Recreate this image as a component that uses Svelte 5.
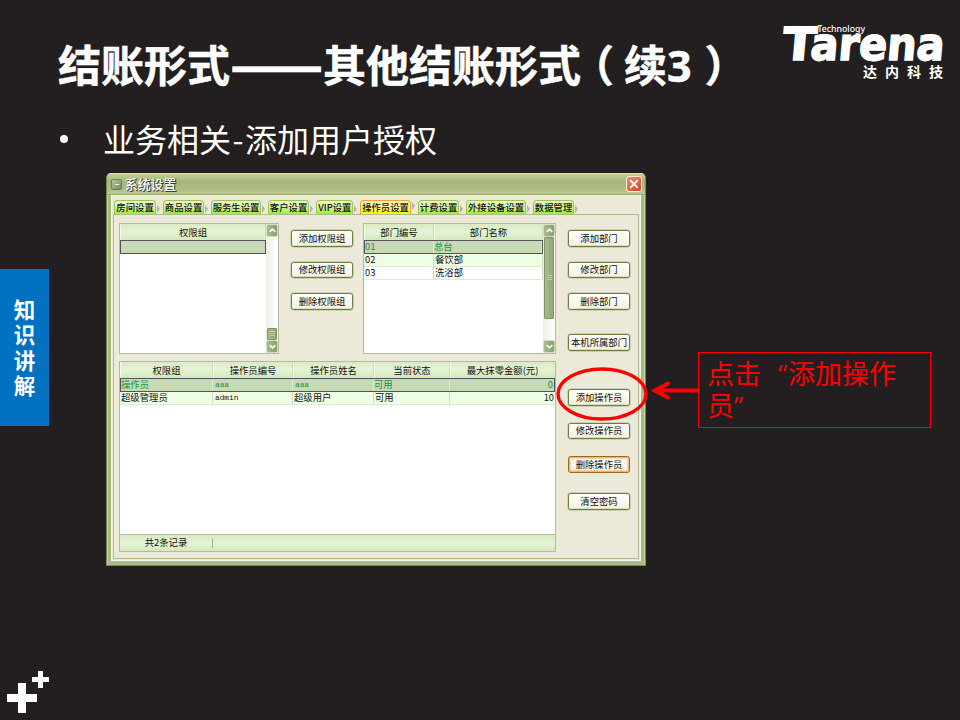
<script>
  const tabs = [
    ['房间设置', 41.5], ['商品设置', 41.5], ['服务生设置', 49.5], ['客户设置', 41.5], ['VIP设置', 37],
    ['操作员设置', 50.5], ['计费设置', 41.5], ['外接设备设置', 59.5], ['数据管理', 41.5]
  ];
  const groupActions = ['添加权限组', '修改权限组', '删除权限组'];
  const sideActions = ['添加部门', '修改部门', '删除部门', '本机所属部门', '添加操作员', '修改操作员', '删除操作员', '清空密码'];
  const departments = [['01', '总台'], ['02', '餐饮部'], ['03', '洗浴部']];
  const operatorHeads = ['权限组', '操作员编号', '操作员姓名', '当前状态', '最大抹零金额(元)'];
  const operators = [
    ['操作员', 'aaa', 'aaa', '可用', '0'],
    ['超级管理员', 'admin', '超级用户', '可用', '10']
  ];
</script>

{#snippet arrow(dir)}
  <i class="sb-arrow">
    <svg width="9" height="9" viewBox="0 0 9 9">
      <path d={dir === 'up' ? 'M1.7 5.8 4.5 3.1l2.8 2.7' : 'M1.7 3.2 4.5 5.9l2.8-2.7'} fill="none" stroke="#fff" stroke-width="1.7" />
    </svg>
  </i>
{/snippet}

<main class="slide">
  <header>
    <h1>结账形式<span class="dash">——</span>其他结账形式<span class="open">（</span>续<span class="num">3</span><span class="close">）</span></h1>
    <svg class="logo" width="184" height="78" viewBox="772 10 184 78">
      <g transform="translate(5.3 0) skewX(-5)">
        <text class="brand cap" x="781.5" y="60" textLength="33.5" lengthAdjust="spacingAndGlyphs">T</text>
        <text class="brand" x="809.5" y="60" textLength="134" lengthAdjust="spacingAndGlyphs">arena</text>
      </g>
      <text class="tech" x="817.5" y="32.4" textLength="47.5" lengthAdjust="spacingAndGlyphs">Technology</text>
      <text class="cn" x="863" y="77.3">达内科技</text>
    </svg>
  </header>

  <p class="bullet"><span class="dot"></span>业务相关<span class="hy">-</span>添加用户授权</p>

  <section class="stage">
    <div class="dialog">
      <div class="titlebar">
        <span class="sysicon"></span>
        <span class="caption">系统设置</span>
        <span class="closebtn">
          <svg width="16" height="16" viewBox="0 0 16 16"><path d="m4.2 4.2 7.6 7.6m0-7.6-7.6 7.6" stroke="#fff" stroke-width="1.9" /></svg>
        </span>
      </div>
      <div class="client">
        <nav>
          {#each tabs as [name, width], i}
            <span class="tab" class:active={i === 5} style="width:{width}px">{name}</span>
          {/each}
        </nav>
        <div class="panel">
          <div class="left">
            <div class="upper">
              <div class="grid groups">
                <div class="cells">
                  <div class="row head"><span>权限组</span></div>
                  <div class="row selected"><span></span></div>
                </div>
                <div class="scroll">{@render arrow('up')}<i class="thumb small"></i>{@render arrow('down')}</div>
              </div>
              <div class="actions">
                {#each groupActions as label}<button>{label}</button>{/each}
              </div>
              <div class="grid depts">
                <div class="cells">
                  <div class="row head"><span>部门编号</span><span>部门名称</span></div>
                  {#each departments as [id, name], i}
                    <div class="row" class:selected={i === 0} class:alt={i === 1}><span>{id}</span><span>{name}</span></div>
                  {/each}
                </div>
                <div class="scroll">{@render arrow('up')}<i class="thumb large"></i><i class="space"></i>{@render arrow('down')}</div>
              </div>
            </div>
            <div class="grid ops">
              <div class="cells">
                <div class="row head">{#each operatorHeads as h}<span>{h}</span>{/each}</div>
                {#each operators as op, i}
                  <div class="row" class:selected={i === 0} class:alt={i === 1}>
                    {#each op as value, c}<span class:mono={c === 1 || value === 'aaa'}>{value}</span>{/each}
                  </div>
                {/each}
                <div class="foot"><span>共2条记录</span></div>
              </div>
            </div>
          </div>
          <div class="side">
            {#each sideActions as label, i}<button class:focus={i === 6}>{label}</button>{/each}
          </div>
        </div>
      </div>
    </div>
    <div class="note">点击<span class="lq">“</span>添加操作<br />员<span class="rq">”</span></div>
  </section>

  <aside>知识讲解</aside>

  <svg class="marks" width="960" height="720" viewBox="0 0 960 720">
    <ellipse cx="602" cy="394" rx="44" ry="25" fill="none" stroke="#f00" stroke-width="3.4" />
    <path d="M698 390.5H656M668 383.5l-13 7 13 7" fill="none" stroke="#f00" stroke-width="4" stroke-linecap="round" />
    <path d="M7 694h11v-11h8v11h11v8H26v11h-8v-11H7zM32 677h6v-6h5v6h6v5h-6v6h-5v-6h-6z" fill="#fff" />
  </svg>
</main>

<style>
  :global(body) { margin: 0; background: #231f20; }
  * { box-sizing: border-box; }
  .slide {
    position: relative; width: 960px; height: 720px; overflow: hidden;
    background: #231f20; color: #fff;
    font-family: "Noto Sans CJK SC", sans-serif;
  }
  header { display: flex; justify-content: space-between; height: 108px; padding: 10px 4px 0 58px; }
  h1 { margin: 20.5px 0 0; font-size: 43px; line-height: 64px; height: 64px; font-weight: 700; white-space: nowrap; -webkit-text-stroke: .5px #fff; }
  .dash { display: inline-block; width: 93px; font-size: 55px; line-height: 1px; position: relative; top: 3px; }
  .open { margin: 0 10px 0 -10px; }
  .close { margin-left: 13px; }
  .num { font-family: "Open Sans", sans-serif; font-size: 43px; line-height: 1px; }
  .brand { font: 700 45px "DejaVu Sans", sans-serif; fill: #fff; stroke: #fff; stroke-width: 1.6; }
  .cap { font-size: 45.5px; }
  .tech { font: 500 9.5px "Noto Sans", sans-serif; fill: #fff; }
  .cn { font-size: 14px; font-weight: 700; letter-spacing: 8px; fill: #fff; }
  .bullet { display: flex; align-items: center; margin: 0; padding-left: 60px; height: 65px; font-size: 32px; line-height: 58px; padding-bottom: 6px; white-space: nowrap; }
  .dot { width: 8px; height: 8px; border-radius: 50%; background: #fff; margin: 3px 35px 0 0; }
  .hy { width: 14px; text-align: center; }

  .stage { display: flex; align-items: flex-start; padding-left: 106px; }
  .dialog {
    width: 540px; height: 393px; border-radius: 5px 5px 0 0; padding: 0 4px 4px;
    background: #a9bb82; border: 1px solid #71894e; border-top-color: #dbe4b6;
    display: flex; flex-direction: column; color: #111; font-size: 9.35px;
    box-shadow: inset 1px 0 #c5d3a0, inset -1px 0 #c5d3a0;
  }
  .titlebar {
    display: flex; align-items: center; height: 21px; margin: 0 -4px; padding: 0 3px 0 4px;
    background: linear-gradient(#c5d096, #a6b67c 35%, #a9b980 70%, #bfcb94); border-bottom: 1px solid #8fa466;
    border-radius: 4px 4px 0 0;
  }
  .sysicon { width: 11px; height: 11px; border: 1px solid #66814f; border-radius: 2px; background: linear-gradient(135deg, #b8c99b, #6d8c5c); display: flex; align-items: center; justify-content: center; }
  .sysicon::after { content: ''; width: 4px; height: 1px; background: #fff; }
  .caption { margin-left: 3px; font-size: 12.8px; line-height: 20px; font-weight: 500; color: #fff; text-shadow: 1px 1px #3b432b, 1px 0 #59633e; flex: 1; }
  .closebtn { width: 16px; height: 16px; border: 1px solid #fff0dc; border-radius: 3px; background: linear-gradient(135deg, #ee9270, #cf4420); display: flex; align-items: center; justify-content: center; }
  .closebtn svg { flex: none; }
  .client { flex: 1; background: #ece9d8; border: 1px solid #f8f7ea; padding: 4px 1px 1px; display: flex; flex-direction: column; }
  nav { display: flex; gap: 7px; height: 14px; padding-left: 1.3px; }
  .tab {
    position: relative; height: 14px; flex: none; border: 1px solid #9ac653; border-bottom: 0; border-radius: 4px 4px 0 0;
    background: linear-gradient(#ecf6d2, #d5f29b 45%, #a1eb39); line-height: 12px; white-space: nowrap;
    display: flex; justify-content: center; font-weight: 500;
  }
  .tab::after { content: ''; position: absolute; right: -5px; top: 4px; border: 4px solid transparent; border-left: 3px solid #b3b5aa; border-right: 0; }
  .tab.active { background: linear-gradient(#fff0cc, #fff083 45%, #ff0); border-color: #efa52d; }
  .tab.active::after { top: 1px; }
  .panel { flex: 1; display: flex; justify-content: space-between; border: 1px solid #a9bd8f; padding: 8px 8px 0 5px; }
  .left { width: 437px; }
  .upper { display: flex; justify-content: space-between; height: 131px; margin-bottom: 7px; }
  .grid { display: flex; background: #fff; border: 1px solid #adbc9e; }
  .groups { width: 160px; }
  .depts { width: 193px; }
  .ops { height: 191px; }
  .cells { flex: 1; display: flex; flex-direction: column; }
  .row { display: flex; height: 13px; line-height: 11px; flex: none; }
  .row span { border-right: 1px solid #cbdfb9; padding-left: 1px; white-space: nowrap; height: 100%; border-bottom: 1px solid #dcebd0; }
  .alt { background: #eeffe6; }
  .row.head { height: 16px; line-height: 16px; background: linear-gradient(#dbeac4, #e5f3d6 50%, #d3e8bb); text-align: center; }
  .head span { border-bottom: 0; box-shadow: inset 1px 0 #f4faea; }
  .row.selected { height: 14px; line-height: 10px; background: #c6dab5; color: #159447; border: 1px solid #56515c; }
  .selected span { border-bottom: 0; padding-left: 0; border-right-color: #dcebd0; }
  .groups .row { width: 146px; }
  .groups span { flex: 1; }
  .groups .selected span { border-right: 0; }
  .depts .row { width: 179px; }
  .depts span:first-child { width: 70px; }
  .depts .selected span:first-child { width: 69px; }
  .depts .row span:nth-child(2) { flex: 1; }
  .ops span:nth-child(1) { width: 93px; }
  .ops .selected span:nth-child(1) { width: 92px; }
  .ops span:nth-child(2) { width: 80px; }
  .ops span:nth-child(3) { width: 81px; }
  .ops span:nth-child(4) { width: 76px; }
  .ops .row span:nth-child(5) { flex: 1; text-align: right; padding-right: 1px; border-right: 0; }
  .ops .row.head span:nth-child(5) { text-align: center; }
  .row .mono { font-family: "Liberation Mono", monospace; font-size: 7.8px; line-height: 13px; padding-left: 2px; }
  .foot { margin-top: auto; height: 17px; display: flex; align-items: center; background: linear-gradient(#dbeac4, #e5f3d6 50%, #d3e8bb); border-top: 1px solid #adc3a0; }
  .foot span { border-right: 1px solid #a5b594; height: 10px; line-height: 8px; text-align: center; }
  .scroll { width: 12px; display: flex; flex-direction: column; background: linear-gradient(90deg, #eeede5, #fff); }
  .sb-arrow { width: 12px; height: 13px; flex: none; border: 1px solid #d4ddc1; border-radius: 2px; background: linear-gradient(90deg, #a8bc8d, #87a06e); display: flex; align-items: center; justify-content: center; }
  .sb-arrow svg { flex: none; }
  .thumb { flex: none; background: linear-gradient(90deg, #a9bb90, #8fa678); border: 1px solid #7c9662; border-radius: 1px; display: flex; align-items: center; justify-content: center; }
  .thumb::after { content: ''; width: 5px; height: 6px; background: repeating-linear-gradient(#c1d0a9 0 1px, #91a878 1px 2px); }
  .small { height: 12px; margin: auto 1px 0; }
  .large { height: 82px; margin: 0 1px; }
  .space { flex: 1; }
  .actions { display: flex; flex-direction: column; gap: 15px; padding: 7px 0 0 2px; }
  button {
    display: flex; align-items: center; justify-content: center; flex: none; width: 62px; height: 16.5px; padding: 0 0 1px; white-space: nowrap;
    font: 9.35px/14px "Noto Sans CJK SC", sans-serif; color: #111;
    border: 1px solid #66803f; border-radius: 2.5px; background: linear-gradient(#fffff8, #f4f1e2); box-shadow: inset 0 -1px #dedac2, 0 0 0 .5px #a9b98c;
  }
  .side { padding-top: 7px; }
  .side button { margin-bottom: 15px; }
  .side button:nth-child(3) { margin-bottom: 24.5px; }
  .side button:nth-child(4) { margin-bottom: 38.5px; }
  .side button:nth-child(5), .side button:nth-child(6) { margin-bottom: 17.2px; }
  .side button:nth-child(7) { margin-bottom: 20.5px; }
  .focus { border-color: #9b6a1c; box-shadow: inset 0 0 0 1.5px #efb375; }

  .note { width: 233px; height: 76px; margin: 179px 0 0 52px; border: 1px solid #f00; padding: 4px 0 0 8px; color: #f00; font-size: 27px; line-height: 32px; white-space: nowrap; }
  .lq, .rq { display: inline-block; width: 27px; height: 32px; vertical-align: top; font-family: "Open Sans", sans-serif; font-size: 26px; }
  .lq { text-align: right; padding-right: 1px; }
  aside {
    position: absolute; left: 0; top: 269px; width: 49px; height: 157px; background: #0070c0;
    display: flex; align-items: center; justify-content: center; writing-mode: vertical-rl; font-weight: 700; font-size: 21.5px; letter-spacing: 3.8px; line-height: 49px; padding-top: 5px;
  }
  .marks { position: absolute; left: 0; top: 0; pointer-events: none; }
</style>
